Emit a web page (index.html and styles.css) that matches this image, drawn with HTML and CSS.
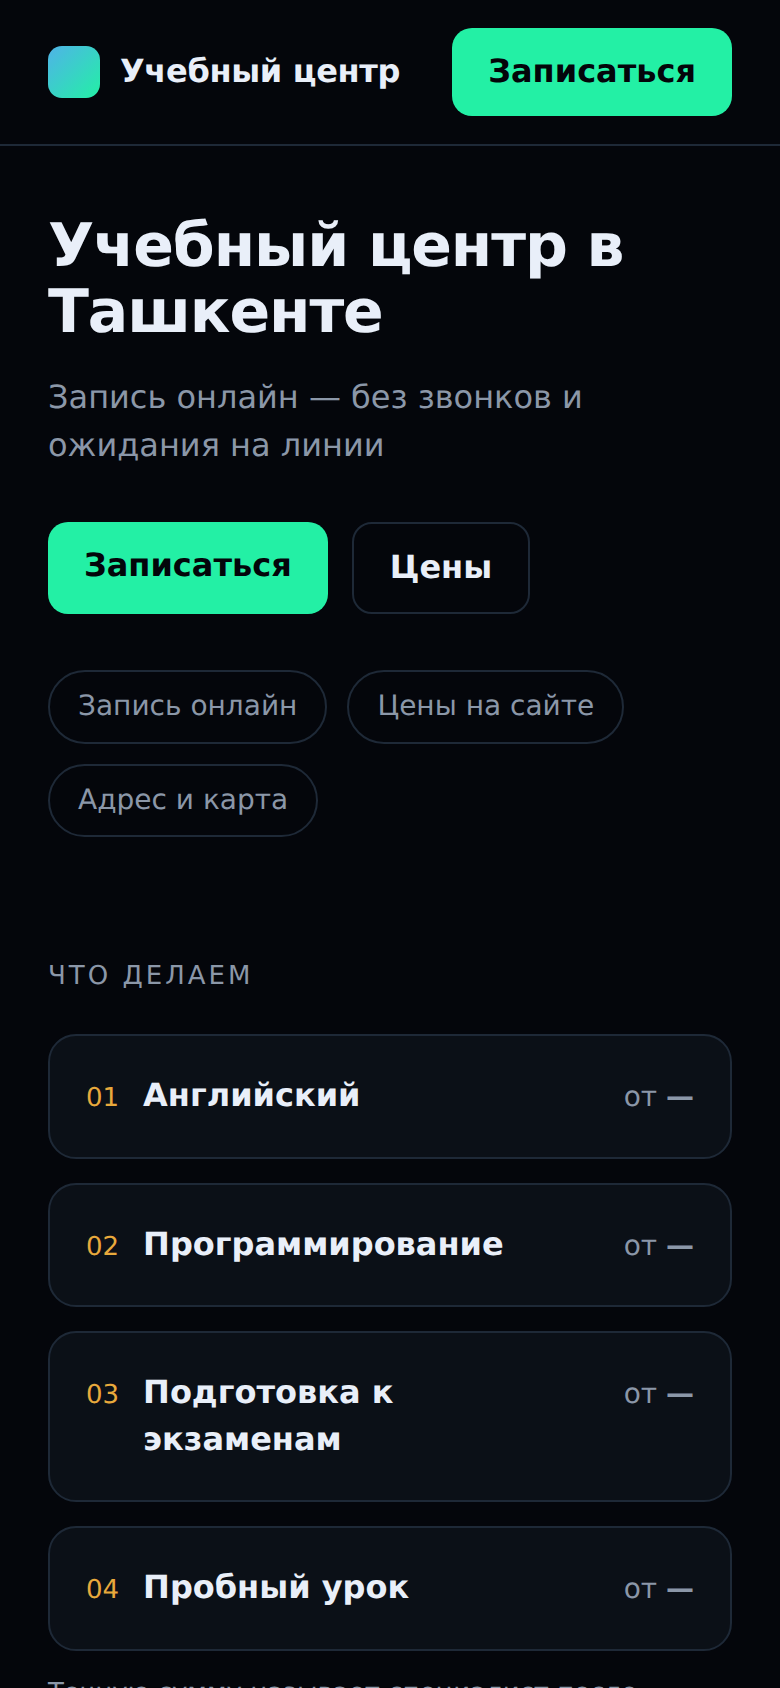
FILE: index.html
```html
<!DOCTYPE html>
<html lang="ru">
<head>
<meta charset="utf-8">
<title>Учебный центр</title>
<link rel="stylesheet" href="styles.css">
</head>
<body>
<header class="topbar">
  <div class="brand"><span class="logo"></span><span class="brand-name">Учебный центр</span></div>
  <a class="btn btn-primary" href="#">Записаться</a>
</header>
<main class="content">
  <section class="hero">
    <h1 class="title">Учебный центр в Ташкенте</h1>
    <p class="lead">Запись онлайн — без звонков и ожидания на линии</p>
    <div class="actions">
      <a class="btn btn-primary" href="#">Записаться</a>
      <a class="btn btn-ghost" href="#">Цены</a>
    </div>
    <ul class="chips">
      <li class="chip">Запись онлайн</li>
      <li class="chip">Цены на сайте</li>
      <li class="chip">Адрес и карта</li>
    </ul>
  </section>
  <section class="services">
    <h2 class="eyebrow">Что делаем</h2>
    <ul class="cards">
      <li class="card"><span class="num">01</span><span class="name">Английский</span><span class="price">от <b class="dash">—</b></span></li>
      <li class="card"><span class="num">02</span><span class="name">Программирование</span><span class="price">от <b class="dash">—</b></span></li>
      <li class="card"><span class="num">03</span><span class="name">Подготовка к экзаменам</span><span class="price">от <b class="dash">—</b></span></li>
      <li class="card"><span class="num">04</span><span class="name">Пробный урок</span><span class="price">от <b class="dash">—</b></span></li>
    </ul>
    <p class="note">Точную сумму называет специалист после</p>
  </section>
</main>
</body>
</html>
```
FILE: styles.css
```css
* { box-sizing: border-box; }
html, body { margin: 0; height: 1688px; overflow: hidden; }
body {
  background: #04060b;
  color: #e9eff9;
  font-family: "DejaVu Sans", sans-serif;
  text-rendering: geometricPrecision;
}
a { text-decoration: none; }
ul { list-style: none; margin: 0; padding: 0; }

.topbar {
  display: flex;
  align-items: center;
  justify-content: space-between;
  height: 146px;
  padding: 0 48px;
  border-bottom: 2px solid #1e2937;
}
.brand { display: flex; align-items: center; gap: 20px; }
.logo {
  width: 52px;
  height: 52px;
  border-radius: 14px;
  background: linear-gradient(135deg, #4fb3e8, #23f0a5);
}
.brand-name { padding-bottom: 2px; font-size: 32px; font-weight: 700; letter-spacing: -0.32px; }

.btn {
  display: block;
  padding: 25px 36px 27px;
  border-radius: 20px;
  font-size: 32px;
  font-weight: 700;
  line-height: 36px;
}
.btn-primary { background: #23f0a5; color: #03050a; }
.btn-ghost { border: 2px solid #1e2937; color: #e9eff9; }

.content { padding: 0 48px; }
.hero { padding-top: 67px; }
.title { margin: 0; font-size: 60px; line-height: 66px; font-weight: 700; letter-spacing: -1.1px; }
.lead { margin: 28px 0 0; font-size: 32px; line-height: 48px; color: #8b97a8; }
.actions { display: flex; gap: 24px; margin-top: 53px; }
.chips { display: flex; flex-wrap: wrap; gap: 20px; margin-top: 56px; }
.chip {
  padding: 17px 28px 19px;
  border: 2px solid #1e2937;
  border-radius: 999px;
  font-size: 28px;
  line-height: 33.6px;
  color: #8b97a8;
}

.services { padding-top: 124px; }
.eyebrow {
  margin: 0;
  font-size: 26px;
  font-weight: 400;
  letter-spacing: 3px;
  text-transform: uppercase;
  color: #8b97a8;
}
.cards { display: flex; flex-direction: column; gap: 24px; margin-top: 43px; }
.card {
  display: flex;
  align-items: baseline;
  gap: 24px;
  padding: 36px 36px 37.4px;
  border: 2px solid #1e2937;
  border-radius: 28px;
  background: #0b1017;
}
.num { color: #e8a93c; font-size: 26px; line-height: 40px; }
.name { flex: 1; font-size: 32px; font-weight: 700; line-height: 47px; }
.price { color: #8b97a8; font-size: 28px; line-height: 42px; }
.dash { font-weight: 700; }
.note { margin: 24px 0 0; font-size: 26px; line-height: 36px; color: #8b97a8; }
```
